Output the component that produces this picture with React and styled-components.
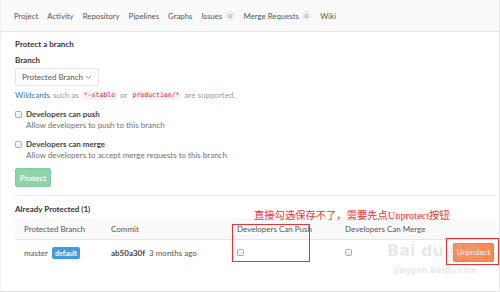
import React from "react";
import styled, { createGlobalStyle } from "styled-components";

const Global = createGlobalStyle`
  html, body { margin: 0; padding: 0; background: #fff; }
  body { font-family: Lato, "Noto Sans", sans-serif; color: #2e2e2e; }
  * { box-sizing: border-box; }
`;

const Page = styled.div`
  width: 500px;
  height: 292px;
  position: relative;
  overflow: hidden;
  border-right: 1px solid #e5e5e5;
  border-bottom: 1px solid #e5e5e5;
  border-left: 1px solid #eee;
`;

const Nav = styled.div`
  height: 32px;
  background: #fafafa;
  border-bottom: 1px solid #e5e5e5;
  display: flex;
  align-items: center;
  gap: 9px;
  padding-left: 13px;
  font-size: 7.8px;
  color: #555;
`;

const NavItem = styled.span`
  display: flex;
  align-items: center;
  gap: 3px;
`;

const Count = styled.span`
  background: #eee;
  color: #888;
  border-radius: 6px;
  font-size: 6px;
  padding: 1px 3px;
`;

const Main = styled.div`
  padding: 7px 3px 0 14px;
  font-size: 8px;
  line-height: 10px;
`;

const Title = styled.div`
  font-weight: 700;
  font-size: 8px;
  color: #333;
  margin-bottom: 6px;
`;

const Label = styled.div`
  font-weight: 700;
  color: #333;
  margin-bottom: 3px;
`;

const Select = styled.div`
  width: 84px;
  height: 18px;
  border: 1px solid #e5e5e5;
  border-radius: 2px;
  display: flex;
  align-items: center;
  justify-content: space-between;
  padding: 0 6px;
  color: #555;
`;

const Help = styled.div`
  margin-top: 4px;
  color: #999;
  display: flex;
  align-items: center;
  gap: 3px;
`;

const Link = styled.span`
  color: #3777b0;
`;

const Code = styled.code`
  font-family: "DejaVu Sans Mono", monospace;
  font-size: 6.5px;
  line-height: 9px;
  color: #c7254e;
  background: #f9f2f4;
  padding: 0 2px;
  border-radius: 2px;
`;

const CheckRow = styled.div`
  margin-top: ${(p) => p.$top}px;
  display: grid;
  grid-template-columns: 11px auto;
  row-gap: 1px;
  align-items: center;
`;

const Box = styled.span`
  width: 7px;
  height: 7px;
  border: 1px solid #aaa;
  border-radius: 1.5px;
  background: linear-gradient(#fff, #e8e8e8);
  display: inline-block;
`;

const CheckLabel = styled.span`
  font-weight: 700;
  color: #444;
`;

const CheckHelp = styled.span`
  grid-column: 2;
  color: #707070;
`;

const ProtectBtn = styled.div`
  margin-top: 8px;
  width: 36px;
  height: 19px;
  background: #8fd3a9;
  border: 1px solid #84cca0;
  border-radius: 2px;
  color: #fff;
  display: flex;
  align-items: center;
  justify-content: center;
  font-weight: 700;
`;

const Rule = styled.div`
  margin-top: 8px;
  height: 1px;
  background: #eee;
`;

const Sub = styled(Title)`
  margin-top: 8px;
  margin-bottom: 4px;
`;

const Table = styled.div`
  display: grid;
  grid-template-columns: 87px 126px 108px 1fr 52px;
`;

const Head = styled.div`
  background: #fafafa;
  height: 22px;
  display: flex;
  align-items: center;
  padding-left: ${(p) => p.$pl || 0}px;
  color: #555;
  border-bottom: 1px solid #e5e5e5;
`;

const Cell = styled.div`
  height: 25px;
  display: flex;
  align-items: center;
  gap: 4px;
  padding-left: ${(p) => p.$pl || 0}px;
  color: #555;
`;

const Badge = styled.span`
  background: #3a9ee0;
  color: #fff;
  border-radius: 2px;
  padding: 1px 3px;
  font-size: 7px;
  font-weight: 700;
`;

const Sha = styled.span`
  font-weight: 700;
  color: #444;
`;

const Unprotect = styled.div`
  width: 41px;
  height: 19px;
  margin-left: auto;
  margin-right: 2px;
  background: #fc8a51;
  border: 1px solid #f47a3c;
  border-radius: 2px;
  color: #fff;
  font-size: 7.5px;
  display: flex;
  align-items: center;
  justify-content: center;
`;

const Note = styled.div`
  position: absolute;
  left: 253px;
  top: 209px;
  color: #ff2b2b;
  font-family: "Liberation Serif", "Noto Sans CJK SC", serif;
  font-size: 10.3px;
  line-height: 14px;
  white-space: nowrap;
`;

const Frame = styled.div`
  position: absolute;
  left: ${(p) => p.$x}px;
  top: ${(p) => p.$y}px;
  width: ${(p) => p.$w}px;
  height: ${(p) => p.$h}px;
  border: 1.5px solid #ee3030;
`;

const Mark = styled.div`
  position: absolute;
  left: ${(p) => p.$x}px;
  top: ${(p) => p.$y}px;
  color: rgba(190, 190, 190, 0.35);
  font-family: "DejaVu Sans", sans-serif;
  font-size: ${(p) => p.$s}px;
  font-weight: 700;
  white-space: nowrap;
  pointer-events: none;
`;

export default function App() {
  return (
    <>
      <Global />
      <Page>
        <Nav>
          <NavItem>Project</NavItem>
          <NavItem>Activity</NavItem>
          <NavItem>Repository</NavItem>
          <NavItem>Pipelines</NavItem>
          <NavItem>Graphs</NavItem>
          <NavItem>
            Issues <Count>0</Count>
          </NavItem>
          <NavItem>
            Merge Requests <Count>0</Count>
          </NavItem>
          <NavItem>Wiki</NavItem>
        </Nav>
        <Main>
          <Title>Protect a branch</Title>
          <Label>Branch</Label>
          <Select>
            <span>Protected Branch</span>
            <svg width="7" height="5" viewBox="0 0 7 5">
              <path d="M1 1l2.5 2.5L6 1" fill="none" stroke="#999" strokeWidth="0.9" />
            </svg>
          </Select>
          <Help>
            <Link>Wildcards</Link> such as <Code>*-stable</Code> or <Code>production/*</Code> are supported.
          </Help>
          <CheckRow $top={9}>
            <Box />
            <CheckLabel>Developers can push</CheckLabel>
            <CheckHelp>Allow developers to push to this branch</CheckHelp>
          </CheckRow>
          <CheckRow $top={9}>
            <Box />
            <CheckLabel>Developers can merge</CheckLabel>
            <CheckHelp>Allow developers to accept merge requests to this branch</CheckHelp>
          </CheckRow>
          <ProtectBtn>Protect</ProtectBtn>
          <Rule />
          <Sub>Already Protected (1)</Sub>
          <Table>
            <Head $pl={9}>Protected Branch</Head>
            <Head $pl={9}>Commit</Head>
            <Head $pl={9}>Developers Can Push</Head>
            <Head $pl={9}>Developers Can Merge</Head>
            <Head />
            <Cell $pl={9}>
              master <Badge>default</Badge>
            </Cell>
            <Cell $pl={9}>
              <Sha>ab50a30f</Sha> 3 months ago
            </Cell>
            <Cell $pl={9}>
              <Box />
            </Cell>
            <Cell $pl={9}>
              <Box />
            </Cell>
            <Cell>
              <Unprotect>Unprotect</Unprotect>
            </Cell>
          </Table>
        </Main>
        <Mark $x={386} $y={241} $s={16}>Bai du 经验</Mark>
        <Mark $x={393} $y={266} $s={8}>jingyan.baidu.com</Mark>
        <Note>直接勾选保存不了，需要先点Unprotect按钮</Note>
        <Frame $x={231} $y={224} $w={78} $h={38} />
        <Frame $x={445} $y={238} $w={53} $h={27} />
      </Page>
    </>
  );
}
